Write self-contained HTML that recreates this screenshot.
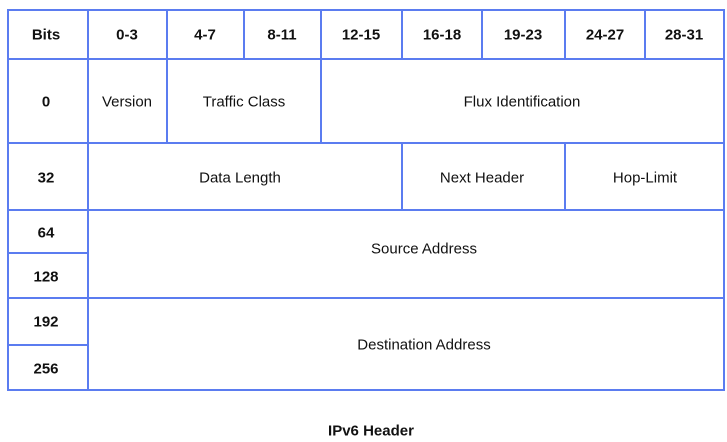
<!DOCTYPE html>
<html><head><meta charset="utf-8"><style>
html,body{margin:0;padding:0;background:#fff;width:727px;height:442px;overflow:hidden}
svg{display:block}
text{font-family:"Liberation Sans",sans-serif;font-size:15px;fill:#111;text-anchor:middle;dominant-baseline:central}
.b{font-weight:bold}
</style></head><body>
<svg width="727" height="442" viewBox="0 0 727 442">
<g stroke="#5b7cf0" stroke-width="2" fill="none">
<rect x="8" y="10" width="716" height="380"/>
<line x1="8" y1="59" x2="724" y2="59"/>
<line x1="8" y1="143" x2="724" y2="143"/>
<line x1="8" y1="210" x2="724" y2="210"/>
<line x1="8" y1="253" x2="88" y2="253"/>
<line x1="8" y1="298" x2="724" y2="298"/>
<line x1="8" y1="345" x2="88" y2="345"/>
<line x1="88" y1="10" x2="88" y2="390"/>
<line x1="167" y1="10" x2="167" y2="143"/>
<line x1="244" y1="10" x2="244" y2="59"/>
<line x1="321" y1="10" x2="321" y2="143"/>
<line x1="402" y1="10" x2="402" y2="59"/>
<line x1="402" y1="143" x2="402" y2="210"/>
<line x1="482" y1="10" x2="482" y2="59"/>
<line x1="565" y1="10" x2="565" y2="59"/>
<line x1="565" y1="143" x2="565" y2="210"/>
<line x1="645" y1="10" x2="645" y2="59"/>
</g>
<g transform="translate(0,1)">
<text class="b" x="46" y="34">Bits</text>
<text class="b" x="127" y="34">0-3</text>
<text class="b" x="205" y="34">4-7</text>
<text class="b" x="282" y="34">8-11</text>
<text class="b" x="361" y="34">12-15</text>
<text class="b" x="442" y="34">16-18</text>
<text class="b" x="523" y="34">19-23</text>
<text class="b" x="605" y="34">24-27</text>
<text class="b" x="684" y="34">28-31</text>
<text class="b" x="46" y="101">0</text>
<text x="127" y="101">Version</text>
<text x="244" y="101">Traffic Class</text>
<text x="522" y="101">Flux Identification</text>
<text class="b" x="46" y="177">32</text>
<text x="240" y="177">Data Length</text>
<text x="482" y="177">Next Header</text>
<text x="645" y="177">Hop-Limit</text>
<text class="b" x="46" y="232">64</text>
<text class="b" x="46" y="276">128</text>
<text x="424" y="248">Source Address</text>
<text class="b" x="46" y="321">192</text>
<text class="b" x="46" y="368">256</text>
<text x="424" y="344">Destination Address</text>
<text class="b" x="371" y="430">IPv6 Header</text>
</g>
</svg>
</body></html>
